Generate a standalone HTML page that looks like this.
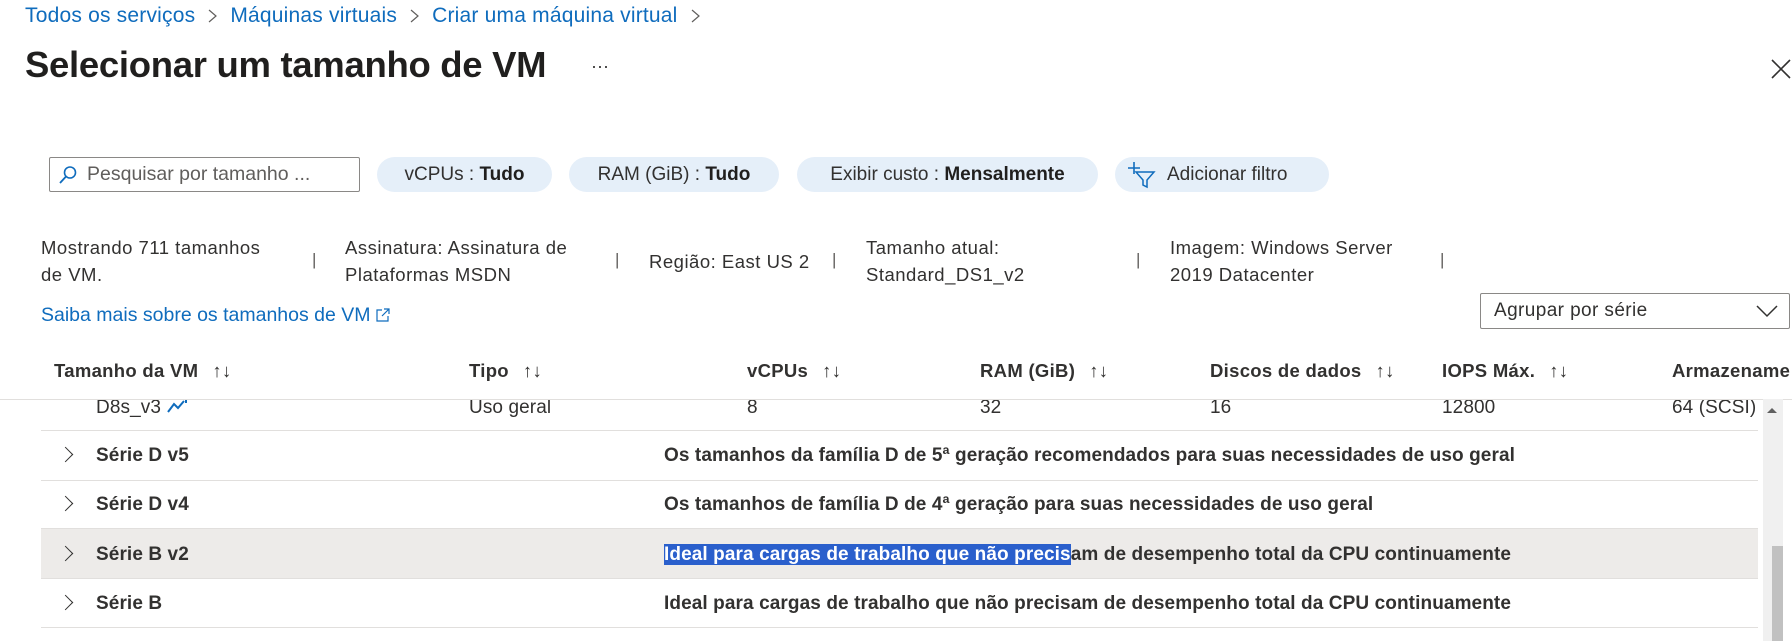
<!DOCTYPE html>
<html><head><meta charset="utf-8"><style>
*{margin:0;padding:0;box-sizing:border-box}
body{width:1792px;height:641px;overflow:hidden;background:#fff;font-family:"Liberation Sans",sans-serif;color:#323130;position:relative}
.a{position:absolute;white-space:nowrap}
.bc{top:4px;left:25px;font-size:21px;color:#0f6cbd;letter-spacing:0.2px}
.bc svg{margin:0 13px;vertical-align:-1px}
.title{top:44px;left:25px;font-size:36.5px;font-weight:bold;color:#201f1e;letter-spacing:-0.3px}
.pill{top:157px;height:35px;border-radius:18px;background:#e5eff9;font-size:19px;line-height:35px;text-align:center;color:#323130}
.pill b{color:#201f1e}
.info{font-size:18.5px;line-height:27px;color:#323130;letter-spacing:0.5px}
.sep{font-size:17px;color:#605e5c}
.hd{top:360px;font-size:18.5px;font-weight:bold;color:#323130;letter-spacing:0.3px}
.hd i{font-style:normal;font-weight:normal;margin-left:14px}
.line{position:absolute;left:41px;width:1717px;height:1px;background:#e1dfdd}
.row{font-size:19px;letter-spacing:0.1px}
.chev{position:absolute;left:60px;width:11px;height:11px;border-right:1.5px solid #323130;border-top:1.5px solid #323130;transform:rotate(45deg)}
</style></head><body>
<div class="a bc">Todos os serviços<svg width="9" height="14"><path d="M1 1L8 7L1 13" fill="none" stroke="#605e5c" stroke-width="1.2"/></svg>Máquinas virtuais<svg width="9" height="14"><path d="M1 1L8 7L1 13" fill="none" stroke="#605e5c" stroke-width="1.2"/></svg>Criar uma máquina virtual<svg width="9" height="14"><path d="M1 1L8 7L1 13" fill="none" stroke="#605e5c" stroke-width="1.2"/></svg></div>
<div class="a title">Selecionar um tamanho de VM</div>
<div class="a" style="top:56px;left:591px;font-size:18px;color:#323130">···</div>
<svg class="a" style="left:1770px;top:58px" width="22" height="22"><path d="M2 2L20 20M20 2L2 20" stroke="#323130" stroke-width="1.6"/></svg>

<div class="a" style="left:49px;top:157px;width:311px;height:35px;border:1px solid #8a8886;border-radius:2px"></div>
<svg class="a" style="left:58px;top:165px" width="20" height="20"><circle cx="12" cy="7.5" r="5.5" fill="none" stroke="#0f6cbd" stroke-width="1.6"/><path d="M8 11.5L2 18" stroke="#0f6cbd" stroke-width="1.8"/></svg>
<div class="a" style="left:87px;top:163px;font-size:19.5px;color:#605e5c">Pesquisar por tamanho ...</div>
<div class="a pill" style="left:377px;width:175px">vCPUs : <b>Tudo</b></div>
<div class="a pill" style="left:569px;width:210px">RAM (GiB) : <b>Tudo</b></div>
<div class="a pill" style="left:797px;width:301px">Exibir custo : <b>Mensalmente</b></div>
<div class="a pill" style="left:1115px;width:214px;padding-left:52px;text-align:left">Adicionar filtro</div>
<svg class="a" style="left:1128px;top:160px" width="32" height="30"><path d="M6 2V14M0 8H12" stroke="#0f6cbd" stroke-width="1.6"/><path d="M8 12H26L19 20V27L15 25V20Z" fill="none" stroke="#0f6cbd" stroke-width="1.5"/></svg>

<div class="a info" style="left:41px;top:234px">Mostrando 711 tamanhos<br>de VM.</div>
<div class="a sep" style="left:312px;top:250px">|</div>
<div class="a info" style="left:345px;top:234px">Assinatura: Assinatura de<br>Plataformas MSDN</div>
<div class="a sep" style="left:615px;top:250px">|</div>
<div class="a info" style="left:649px;top:248px">Região: East US 2</div>
<div class="a sep" style="left:832px;top:250px">|</div>
<div class="a info" style="left:866px;top:234px">Tamanho atual:<br>Standard_DS1_v2</div>
<div class="a sep" style="left:1136px;top:250px">|</div>
<div class="a info" style="left:1170px;top:234px">Imagem: Windows Server<br>2019 Datacenter</div>
<div class="a sep" style="left:1440px;top:250px">|</div>
<div class="a" style="left:41px;top:304px;font-size:19.5px;color:#0f6cbd">Saiba mais sobre os tamanhos de VM <svg width="14" height="14" style="vertical-align:-1px"><path d="M6 2H1V13H12V8M8 1H13V6M13 1L6 8" fill="none" stroke="#0f6cbd" stroke-width="1.2"/></svg></div>

<div class="a" style="left:1480px;top:293px;width:310px;height:36px;border:1px solid #8a8886;border-radius:2px"></div>
<div class="a" style="left:1494px;top:300px;font-size:19px;color:#323130;letter-spacing:0.4px">Agrupar por série</div>
<svg class="a" style="left:1756px;top:304px" width="22" height="14"><path d="M1 2L11 12L21 2" fill="none" stroke="#323130" stroke-width="1.5"/></svg>

<div class="a hd" style="left:54px">Tamanho da VM<i>↑↓</i></div>
<div class="a hd" style="left:469px">Tipo<i>↑↓</i></div>
<div class="a hd" style="left:747px">vCPUs<i>↑↓</i></div>
<div class="a hd" style="left:980px">RAM (GiB)<i>↑↓</i></div>
<div class="a hd" style="left:1210px">Discos de dados<i>↑↓</i></div>
<div class="a hd" style="left:1442px">IOPS Máx.<i>↑↓</i></div>
<div class="a hd" style="left:1672px">Armazename</div>

<div style="position:absolute;left:0;top:399px;width:1760px;height:31px;overflow:hidden">
<div class="a row" style="left:96px;top:-2px">D8s_v3 <svg width="24" height="16" style="vertical-align:-1px"><path d="M2 14L8 6L12 10L18 3M20 1V5" fill="none" stroke="#0f6cbd" stroke-width="2"/></svg></div>
<div class="a row" style="left:469px;top:-2px">Uso geral</div>
<div class="a row" style="left:747px;top:-2px">8</div>
<div class="a row" style="left:980px;top:-2px">32</div>
<div class="a row" style="left:1210px;top:-2px">16</div>
<div class="a row" style="left:1442px;top:-2px">12800</div>
<div class="a row" style="left:1672px;top:-2px">64 (SCSI)</div>
</div>
<div class="line" style="top:399px;left:0;width:1792px"></div>
<div class="line" style="top:430px"></div>
<div class="line" style="top:480px"></div>
<div class="line" style="top:528px"></div>
<div style="position:absolute;left:41px;top:529px;width:1717px;height:49px;background:#edebe9"></div>
<div class="line" style="top:578px"></div>
<div class="line" style="top:627px"></div>

<div class="chev" style="top:449px"></div>
<div class="a row" style="left:96px;top:445px;font-weight:bold">Série D v5</div>
<div class="a row" style="left:664px;top:445px;font-weight:bold">Os tamanhos da família D de 5ª geração recomendados para suas necessidades de uso geral</div>
<div class="chev" style="top:498px"></div>
<div class="a row" style="left:96px;top:494px;font-weight:bold">Série D v4</div>
<div class="a row" style="left:664px;top:494px;font-weight:bold">Os tamanhos de família D de 4ª geração para suas necessidades de uso geral</div>
<div class="chev" style="top:548px"></div>
<div class="a row" style="left:96px;top:544px;font-weight:bold">Série B v2</div>
<div class="a row" style="left:664px;top:544px;font-weight:bold"><span style="background:#2a5fcc;color:#fff">Ideal para cargas de trabalho que não precis</span>am de desempenho total da CPU continuamente</div>
<div class="chev" style="top:597px"></div>
<div class="a row" style="left:96px;top:593px;font-weight:bold">Série B</div>
<div class="a row" style="left:664px;top:593px;font-weight:bold">Ideal para cargas de trabalho que não precisam de desempenho total da CPU continuamente</div>

<div style="position:absolute;left:1763px;top:399px;width:20px;height:242px;background:#f0f0f0"></div>
<div style="position:absolute;left:1772px;top:546px;width:11px;height:95px;background:#c1c1c1"></div>
<svg class="a" style="left:1766px;top:406px" width="12" height="8"><path d="M1 7L6 2L11 7Z" fill="#606060"/></svg>
</body></html>
